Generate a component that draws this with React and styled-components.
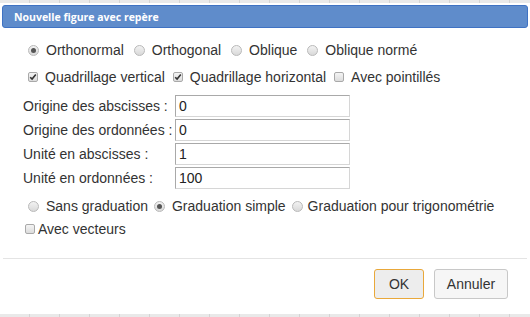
import React from "react";
import styled, { createGlobalStyle } from "styled-components";

const Global = createGlobalStyle`
  html, body { margin: 0; padding: 0; background: #fff; }
  body { font-family: "Liberation Sans", Arial, sans-serif; color: #333; }
`;

const Page = styled.div`
  width: 530px;
  height: 317px;
  display: flex;
  flex-direction: column;
  overflow: hidden;
  background: #fff;
`;

const Strip = styled.div`
  height: ${(p) => p.$h}px;
  flex: none;
  background-color: #e9e9e9;
  background-image: repeating-linear-gradient(
    90deg,
    transparent 0 29px,
    #d4d4d4 29px 30px
  );
`;

const Dialog = styled.div`
  flex: 1;
  display: flex;
  flex-direction: column;
  padding: 2px 2px 0 2px;
`;

const Header = styled.div`
  height: 21px;
  background: #5f8ccb;
  border: 1px solid #3f72c3;
  border-radius: 3px;
  display: flex;
  align-items: center;
  padding-left: 11px;
  color: #fff;
  font-family: "Open Sans", "Liberation Sans", sans-serif;
  font-weight: 700;
  font-size: 10.5px;
`;

const Content = styled.div`
  flex: 1;
  padding: 11px 0 0 21px;
  display: flex;
  flex-direction: column;
`;

const OptionRow = styled.div`
  display: flex;
  align-items: center;
  height: 22px;
  margin-left: ${(p) => p.$indent ?? 5}px;
  margin-top: ${(p) => p.$mt ?? 0}px;
  gap: ${(p) => p.$gap ?? 10}px;
  font-size: 14px;
`;

const Option = styled.label`
  display: inline-flex;
  align-items: center;
  gap: ${(p) => p.$gap ?? 7}px;
  white-space: nowrap;
`;

const Radio = styled.span`
  width: 11px;
  height: 11px;
  box-sizing: border-box;
  border-radius: 50%;
  border: 1px solid #b9b9b9;
  background: linear-gradient(#f2f2f2, #d9d9d9);
  display: inline-flex;
  align-items: center;
  justify-content: center;
  &::after {
    content: "";
    width: 5px;
    height: 5px;
    border-radius: 50%;
    background: ${(p) => (p.$checked ? "#555" : "transparent")};
  }
`;

const Box = styled.span`
  width: 10px;
  height: 10px;
  box-sizing: border-box;
  border-radius: 2px;
  border: 1px solid #a9a9a9;
  background: linear-gradient(#f4f4f4, #dcdcdc);
  display: inline-flex;
  align-items: center;
  justify-content: center;
  svg { display: block; }
`;

const Check = ({ checked }) => (
  <Box>
    {checked && (
      <svg width="8" height="8" viewBox="0 0 8 8">
        <path d="M1.2 4.2 L3.1 6.1 L6.8 1.6" fill="none" stroke="#333" strokeWidth="1.6" />
      </svg>
    )}
  </Box>
);

const Fields = styled.div`
  display: grid;
  grid-template-columns: 152px 175px;
  row-gap: 2px;
  margin-top: 7px;
  align-items: center;
  font-size: 14px;
`;

const FieldLabel = styled.span`
  white-space: nowrap;
`;

const Input = styled.div`
  height: 22px;
  box-sizing: border-box;
  border: 1px solid #a9a9a9;
  border-right-color: #d6d6d6;
  border-bottom-color: #d6d6d6;
  padding-left: 3px;
  display: flex;
  align-items: center;
  font-size: 14px;
  color: #222;
`;

const Footer = styled.div`
  border-top: 1px solid #e4e4e4;
  margin: 0 1px;
  height: 56px;
  display: flex;
  justify-content: flex-end;
  align-items: flex-start;
  padding: 10px 19px 0 0;
  gap: 10px;
  box-sizing: border-box;
`;

const Button = styled.button`
  height: 30px;
  width: ${(p) => p.$w}px;
  box-sizing: border-box;
  border-radius: 3px;
  border: 1px solid ${(p) => (p.$focus ? "#e9a83a" : "#c8c8c8")};
  background: ${(p) => (p.$focus ? "#ededed" : "#f6f6f6")};
  color: #333;
  font-family: "Liberation Sans", Arial, sans-serif;
  font-size: 14px;
  padding: 0;
  cursor: pointer;
`;

export default function App() {
  return (
    <Page>
      <Global />
      <Strip $h={3} />
      <Dialog>
        <Header>Nouvelle figure avec repère</Header>
        <Content>
          <OptionRow $gap={10}>
            <Option><Radio $checked />Orthonormal</Option>
            <Option><Radio />Orthogonal</Option>
            <Option><Radio />Oblique</Option>
            <Option><Radio />Oblique normé</Option>
          </OptionRow>
          <OptionRow $mt={5} $gap={8}>
            <Option><Check checked />Quadrillage vertical</Option>
            <Option><Check checked />Quadrillage horizontal</Option>
            <Option><Check />Avec pointillés</Option>
          </OptionRow>
          <Fields>
            <FieldLabel>Origine des abscisses :</FieldLabel>
            <Input>0</Input>
            <FieldLabel>Origine des ordonnées :</FieldLabel>
            <Input>0</Input>
            <FieldLabel>Unité en abscisses :</FieldLabel>
            <Input>1</Input>
            <FieldLabel>Unité en ordonnées :</FieldLabel>
            <Input>100</Input>
          </Fields>
          <OptionRow $mt={6} $gap={6}>
            <Option><Radio />Sans graduation</Option>
            <Option><Radio $checked />Graduation simple</Option>
            <Option $gap={5}><Radio />Graduation pour trigonométrie</Option>
          </OptionRow>
          <OptionRow $indent={2} $gap={4} $mt={1}>
            <Option $gap={3}><Check />Avec vecteurs</Option>
          </OptionRow>
        </Content>
        <Footer>
          <Button $w={50} $focus>OK</Button>
          <Button $w={74}>Annuler</Button>
        </Footer>
      </Dialog>
      <Strip $h={3} />
    </Page>
  );
}
